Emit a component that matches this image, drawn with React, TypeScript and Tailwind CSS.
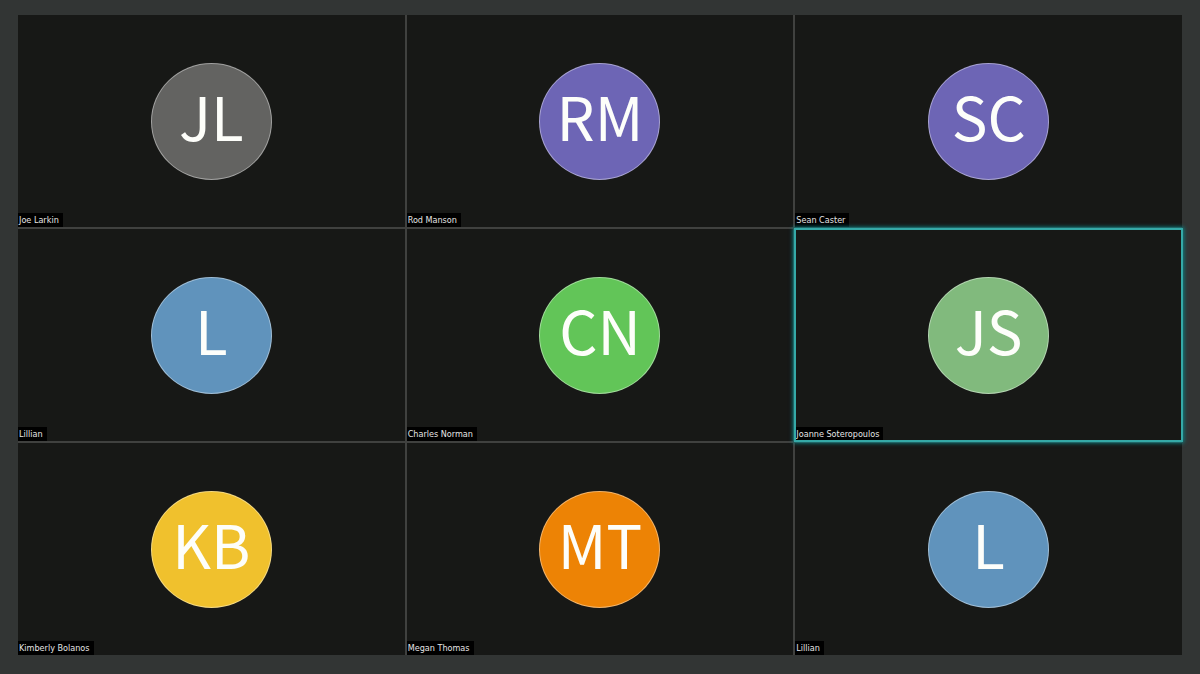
type Participant = {
  id: number;
  name: string;
  initials: string;
  color: string;
  speaking?: boolean;
};

const participants: Participant[] = [
  { id: 1, name: 'Joe Larkin', initials: 'JL', color: 'bg-[#636361]' },
  { id: 2, name: 'Rod Manson', initials: 'RM', color: 'bg-[#6d65b5]' },
  { id: 3, name: 'Sean Caster', initials: 'SC', color: 'bg-[#6d65b5]' },
  { id: 4, name: 'Lillian', initials: 'L', color: 'bg-[#6093bc]' },
  { id: 5, name: 'Charles Norman', initials: 'CN', color: 'bg-[#62c558]' },
  { id: 6, name: 'Joanne Soteropoulos', initials: 'JS', color: 'bg-[#81ba7d]', speaking: true },
  { id: 7, name: 'Kimberly Bolanos', initials: 'KB', color: 'bg-[#f0c12d]' },
  { id: 8, name: 'Megan Thomas', initials: 'MT', color: 'bg-[#ed8305]' },
  { id: 9, name: 'Lillian', initials: 'L', color: 'bg-[#6093bc]' },
];

function Tile({ participant }: { participant: Participant }) {
  const { name, initials, color, speaking } = participant;

  return (
    <li className="relative flex items-center justify-center bg-[#171816]">
      <div
        className={`flex h-[117px] w-[121px] items-center justify-center rounded-[50%] border border-white/40 pb-3 font-['Noto_Sans_CJK_SC',sans-serif] text-[60px] leading-[60px] text-[#fdfefa] ${color}`}
      >
        {initials}
      </div>
      <span className="absolute bottom-0 left-0 bg-black pr-1 pl-px font-['DejaVu_Sans_Condensed','DejaVu_Sans',sans-serif] text-[9px] leading-[14px] text-[#e4e4e4]">
        {name}
      </span>
      {/* active speaker frame */}
      {speaking && (
        <div className="absolute -inset-px z-10 border-2 border-[#35a9a7] shadow-[0_0_4px_1px_#0b7f82]" />
      )}
    </li>
  );
}

export default function App() {
  return (
    <main className="flex min-h-screen bg-[#323534] px-[18px] pt-[15px] pb-[19px]">
      <ul className="grid flex-1 grid-cols-3 grid-rows-3 gap-[2px] bg-[#40413f]">
        {participants.map((participant) => (
          <Tile key={participant.id} participant={participant} />
        ))}
      </ul>
    </main>
  );
}
